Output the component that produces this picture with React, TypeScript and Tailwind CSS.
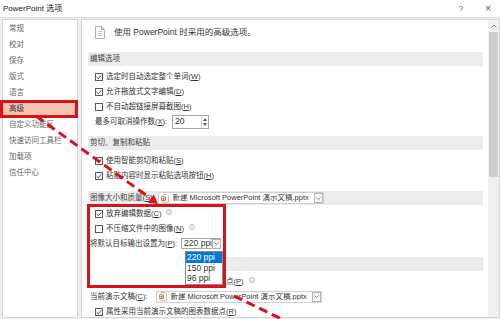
import React from 'react'

const navItems = ['常规', '校对', '保存', '版式', '语言', '高级', '自定义功能区', '快速访问工具栏', '加载项', '信任中心']

function Key({ text, k }: { text: string; k: string }) {
  return (
    <span className="whitespace-nowrap">
      {text}(<span className="underline">{k}</span>)
    </span>
  )
}

function Checkbox({ checked }: { checked?: boolean }) {
  return (
    <span className="w-[8px] h-[8px] shrink-0 border border-[#5a5a5a] bg-white flex items-center justify-center">
      {checked && (
        <svg width="6" height="6" viewBox="0 0 6 6">
          <polyline points="0.6,3.1 2.3,4.7 5.4,1.2" fill="none" stroke="#333" strokeWidth="0.9" />
        </svg>
      )}
    </span>
  )
}

function Info() {
  return (
    <svg width="6" height="6" viewBox="0 0 6 6" className="ml-[2px] -mt-[4px] shrink-0">
      <circle cx="3" cy="3" r="2.5" fill="none" stroke="#8a8a8a" strokeWidth="0.6" />
      <line x1="3" y1="2.6" x2="3" y2="4.4" stroke="#8a8a8a" strokeWidth="0.6" />
      <circle cx="3" cy="1.7" r="0.35" fill="#8a8a8a" />
    </svg>
  )
}

function CheckRow({ checked, text, k, info }: { checked?: boolean; text: string; k: string; info?: boolean }) {
  return (
    <div className="h-[15px] flex items-center pl-[13px] gap-[3px]">
      <Checkbox checked={checked} />
      <Key text={text} k={k} />
      {info && <Info />}
    </div>
  )
}

function Header({ children }: { children: React.ReactNode }) {
  return <div className="h-[14px] ml-[6px] bg-[#ececec] flex items-center pl-[2px] text-[#444]">{children}</div>
}

function PptIcon() {
  return (
    <svg width="8" height="9" viewBox="0 0 8 9" className="shrink-0">
      <path d="M2 0.5 H6 L7.5 2 V8.5 H2 Z" fill="#fff" stroke="#9a9a9a" strokeWidth="0.6" />
      <rect x="0.3" y="2.5" width="4.4" height="4.4" fill="#d24726" />
      <rect x="1.6" y="3.5" width="1.8" height="2.4" fill="none" stroke="#fff" strokeWidth="0.6" />
    </svg>
  )
}

function Arrow() {
  return (
    <span className="w-[9px] h-[10px] border border-[#b5b5b5] bg-[#f4f4f4] flex items-center justify-center shrink-0">
      <svg width="5" height="3" viewBox="0 0 5 3">
        <polyline points="0.4,0.4 2.5,2.5 4.6,0.4" fill="none" stroke="#666" strokeWidth="0.7" />
      </svg>
    </span>
  )
}

function FileCombo({ width }: { width: string }) {
  return (
    <div className={`${width} h-[12px] border border-[#d0d0d0] bg-white flex items-center pl-[2px] gap-[4px]`}>
      <PptIcon />
      <span className="flex-1 whitespace-nowrap overflow-hidden text-[#333]">新建 Microsoft PowerPoint 演示文稿.pptx</span>
      <Arrow />
    </div>
  )
}

export default function App() {
  return (
    <div className="relative w-[500px] h-[319px] overflow-hidden bg-[#f0f0f0] text-[7.5px] leading-none text-[#333] font-['Liberation_Sans','Noto_Sans_CJK_SC',sans-serif]">
      {/* title bar */}
      <div className="h-[18px] bg-white flex items-center pl-[3px] border-b border-[#dcdcdc]">
        <span className="text-[#222] text-[8px]">PowerPoint 选项</span>
        <span className="ml-auto text-[#555] text-[8px]">?</span>
        <span className="ml-[22px] mr-[9px] text-[#555] text-[10px]">×</span>
      </div>

      <div className="flex h-[300px] pt-px">
        {/* nav */}
        <div className="w-[76px] ml-[2px] bg-white border border-[#d4d4d4] text-[#666] pt-px">
          {navItems.map((item) => (
            <div
              key={item}
              className={`h-4 flex items-center pl-[6px] ${item === '高级' ? 'bg-[#f7c4b0] text-[#333]' : ''}`}
            >
              {item}
            </div>
          ))}
        </div>

        {/* content */}
        <div className="flex-1 ml-[3px] bg-white border border-[#d4d4d4] flex">
          <div className="flex-1 pr-[5px]">
            <div className="h-[24px] flex items-center pl-[13px] gap-[9px]">
              <svg width="10" height="13" viewBox="0 0 10 13">
                <path d="M0.5 0.5 H6.5 L9.5 3.5 V12.5 H0.5 Z" fill="#fff" stroke="#8c8c8c" strokeWidth="0.7" />
                <path d="M6.5 0.5 V3.5 H9.5" fill="none" stroke="#8c8c8c" strokeWidth="0.7" />
                <line x1="2.5" y1="5.5" x2="7.5" y2="5.5" stroke="#a8a8a8" strokeWidth="0.6" />
                <line x1="2.5" y1="7.5" x2="7.5" y2="7.5" stroke="#a8a8a8" strokeWidth="0.6" />
                <line x1="2.5" y1="9.5" x2="7.5" y2="9.5" stroke="#a8a8a8" strokeWidth="0.6" />
              </svg>
              <span className="text-[8.5px]">使用 PowerPoint 时采用的高级选项。</span>
            </div>

            <div className="mt-[8px]">
              <Header>编辑选项</Header>
            </div>
            <div className="mt-[3px]">
              <CheckRow checked text="选定时自动选定整个单词" k="W" />
              <CheckRow checked text="允许拖放式文字编辑" k="D" />
              <CheckRow text="不自动超链接屏幕截图" k="H" />
              <div className="h-[15px] flex items-center pl-[13px]">
                <Key text="最多可取消操作数" k="X" />:
                <div className="ml-[5px] w-[37px] h-[14px] border border-[#a8a8a8] flex items-center">
                  <span className="flex-1 pl-[2px] text-[8.5px]">20</span>
                  <div className="w-[7px] h-full flex flex-col items-center justify-center gap-[2px] border-l border-[#d6d6d6]">
                    <svg width="4" height="3" viewBox="0 0 4 3"><polygon points="2,0 4,3 0,3" fill="#555" /></svg>
                    <svg width="4" height="3" viewBox="0 0 4 3"><polygon points="0,0 4,0 2,3" fill="#555" /></svg>
                  </div>
                </div>
              </div>
            </div>

            <div className="mt-[7px]">
              <Header>剪切、复制和粘贴</Header>
            </div>
            <div className="mt-[3px]">
              <CheckRow checked text="使用智能剪切和粘贴" k="S" />
              <CheckRow checked text="粘贴内容时显示粘贴选项按钮" k="H" />
            </div>

            <div className="mt-[8px]">
              <Header>
                <Key text="图像大小和质量" k="S" />
                <div className="ml-[5px]">
                  <FileCombo width="w-[166px]" />
                </div>
              </Header>
            </div>
            <div className="mt-px">
              <CheckRow checked text="放弃编辑数据" k="C" info />
              <CheckRow text="不压缩文件中的图像" k="N" info />
              <div className="h-[15px] flex items-center pl-[8px]">
                <Key text="将默认目标输出设置为" k="P" />:
                <div className="ml-[4px] w-[40px] h-[11px] border border-[#a8a8a8] flex items-center pl-[2px]">
                  <span className="flex-1 whitespace-nowrap text-[8.5px]">220 ppi</span>
                  <Arrow />
                </div>
              </div>
            </div>

            <div className="mt-[6px]">
              <Header>图表</Header>
            </div>
            <div className="mt-[3px]">
              <CheckRow checked text="属性采用所有新演示文稿的图表数据点" k="P" info />
              <div className="h-[15px] flex items-center pl-[8px]">
                <Key text="当前演示文稿" k="C" />:
                <div className="ml-[8px]">
                  <FileCombo width="w-[166px]" />
                </div>
              </div>
              <CheckRow checked text="属性采用当前演示文稿的图表数据点" k="R" />
            </div>
          </div>

          {/* scrollbar */}
          <div className="w-[11px] bg-[#f0f0f0] flex flex-col items-center">
            <div className="h-[12px] flex items-center">
              <svg width="6" height="4" viewBox="0 0 6 4">
                <polyline points="0.5,3.5 3,1 5.5,3.5" fill="none" stroke="#666" strokeWidth="0.8" />
              </svg>
            </div>
            <div className="w-[9px] h-[145px] bg-[#cdcdcd]" />
          </div>
        </div>
      </div>

      {/* annotation: selected nav item */}
      <div className="absolute left-0 top-[100px] w-[78px] h-[18px] border-[3px] border-[#d8131b]" />

      {/* annotation: image quality block, lower part masked */}
      <div className="absolute left-[87px] top-[204px] w-[139px] h-[84px] border-[3px] border-[#d8131b]">
        <div className="absolute left-0 right-0 bottom-0 top-[45px] bg-white" />
      </div>

      {/* open ppi list */}
      <div className="absolute left-[185px] top-[251px] w-[38px] h-[34px] bg-white border border-[#8c8c8c] text-[8.5px] flex flex-col">
        <div className="h-[11px] flex items-center pl-[1px] bg-[#0078d7] text-white">220 ppi</div>
        <div className="h-[11px] flex items-center pl-[1px]">150 ppi</div>
        <div className="h-[11px] flex items-center pl-[1px]">96 ppi</div>
      </div>

      <svg className="absolute left-0 top-0 pointer-events-none" width="500" height="319" viewBox="0 0 500 319">
        <line x1="36" y1="116" x2="150" y2="198" stroke="#d8131b" strokeWidth="3" strokeDasharray="9 5" />
        <polygon points="158,204 147.8,202.7 153.7,194.6" fill="#d8131b" />
        <line x1="234" y1="296" x2="294" y2="325" stroke="#d8131b" strokeWidth="3" strokeDasharray="9 5" />
      </svg>
    </div>
  )
}
